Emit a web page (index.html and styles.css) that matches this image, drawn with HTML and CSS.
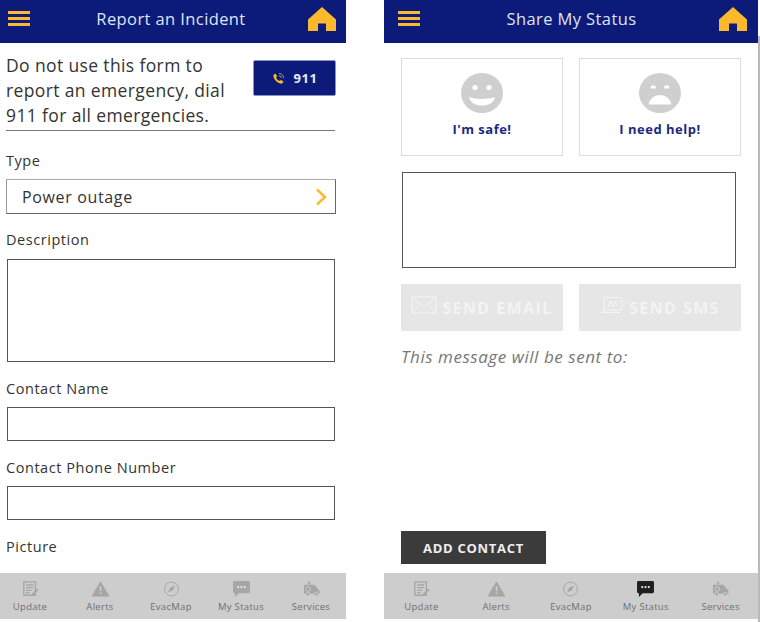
FILE: index.html
```html
<!DOCTYPE html>
<html lang="en">
<head>
<meta charset="utf-8">
<title>Report an Incident / Share My Status</title>
<link rel="stylesheet" href="styles.css">
</head>
<body>
<svg class="defs" width="0" height="0" aria-hidden="true">
  <defs>
    <symbol id="i-home" viewBox="0 0 28 24"><path d="M14 0 L28 12.5 V24 H18 V16.5 H10 V24 H0 V12.5 Z" fill="#fdb92e"/></symbol>
    <symbol id="i-update" viewBox="0 0 18 18"><path d="M1.5 1h13v15h-13z M4 4.500h8 M4 7.500h8 M4 10.500h6 M4 13h4" fill="none" stroke="currentColor" stroke-width="1.500"/><path d="M11 14l5.500-5.500 1.500 1.500-5.500 5.500-2 .5z" fill="currentColor"/></symbol>
    <symbol id="i-alert" viewBox="0 0 18 16"><path d="M9 0.500 L17.800 15.500 H0.200 Z" fill="currentColor" stroke="currentColor" stroke-linejoin="round"/><path d="M9 5v5.200M9 11.800v1.500" stroke="#cdcdcd" stroke-width="1.800"/></symbol>
    <symbol id="i-map" viewBox="0 0 18 18"><circle cx="9" cy="9" r="7.800" fill="none" stroke="currentColor" stroke-width="1.100"/><path d="M13 5 L10.500 10.500 L5 13 L7.500 7.500 Z" fill="currentColor"/></symbol>
    <symbol id="i-status" viewBox="0 0 18 17"><path d="M1.500 0h15a1.500 1.500 0 0 1 1.500 1.500v10a1.500 1.500 0 0 1-1.500 1.500H6l-4 4v-4H1.500A1.500 1.500 0 0 1 0 11.500v-10A1.500 1.500 0 0 1 1.500 0z" fill="currentColor"/><circle cx="5.500" cy="6.500" r="1.200" fill="#e8e8e8"/><circle cx="9" cy="6.500" r="1.200" fill="#e8e8e8"/><circle cx="12.500" cy="6.500" r="1.200" fill="#e8e8e8"/></symbol>
    <symbol id="i-services" viewBox="0 0 18 17"><path d="M1 4h10.500l1 .5 3.500 4 1.500 1.500v3.500H1z" fill="currentColor"/><circle cx="5" cy="14" r="2" fill="currentColor" stroke="#cdcdcd"/><circle cx="14" cy="14" r="2" fill="currentColor" stroke="#cdcdcd"/><path d="M6.500 0.500v3" stroke="currentColor" stroke-width="2"/><circle cx="5.500" cy="8.500" r="2.500" fill="none" stroke="#cdcdcd"/></symbol>
  </defs>
</svg>

<section class="phone phone-left">
  <header class="topbar">
    <span class="burger"><i></i><i></i><i></i></span>
    <h1 class="title">Report an Incident</h1>
    <svg class="home"><use href="#i-home"/></svg>
  </header>
  <main class="form">
    <div class="notice">
      <p class="notice-text">Do not use this form to report an emergency, dial 911 for all emergencies.</p>
      <button class="call" type="button">
        <svg class="call-icon" viewBox="0 0 14 14"><path d="M3.500 1.500 L5.500 4 L4.500 5.800 C5 7.500 6.500 9 8.200 9.500 L10 8.500 L12.500 10.500 L10.800 12.500 C6.500 13 1 7.500 1.500 3.200 Z" fill="#f7b52c"/><path d="M7.500 1.500a5 5 0 0 1 5 5M7.500 4a2.500 2.500 0 0 1 2.500 2.500" fill="none" stroke="#c8a24a" stroke-width="1"/></svg>
        <span>911</span>
      </button>
    </div>
    <label class="label label-type">Type</label>
    <div class="select"><span>Power outage</span><svg class="chev" viewBox="0 0 12 18"><path d="M2 1.500 L10 9 L2 16.500" fill="none" stroke="#fdb92e" stroke-width="2.400"/></svg></div>
    <label class="label label-desc">Description</label>
    <div class="field area"></div>
    <label class="label label-next">Contact Name</label>
    <div class="field line"></div>
    <label class="label label-next">Contact Phone Number</label>
    <div class="field line"></div>
    <label class="label label-next">Picture</label>
  </main>
  <nav class="tabs">
    <a class="tab"><svg class="tab-icon"><use href="#i-update"/></svg><span>Update</span></a>
    <a class="tab"><svg class="tab-icon"><use href="#i-alert"/></svg><span>Alerts</span></a>
    <a class="tab"><svg class="tab-icon"><use href="#i-map"/></svg><span>EvacMap</span></a>
    <a class="tab"><svg class="tab-icon"><use href="#i-status"/></svg><span>My Status</span></a>
    <a class="tab"><svg class="tab-icon"><use href="#i-services"/></svg><span>Services</span></a>
  </nav>
</section>

<section class="phone phone-right">
  <header class="topbar">
    <span class="burger"><i></i><i></i><i></i></span>
    <h1 class="title">Share My Status</h1>
    <svg class="home"><use href="#i-home"/></svg>
  </header>
  <main class="status">
    <div class="cards">
      <button class="card" type="button">
        <svg class="face" viewBox="0 0 42 40"><ellipse cx="21" cy="20" rx="21" ry="20" fill="#cfcfcf"/><circle cx="14" cy="14.500" r="2.600" fill="#fff"/><circle cx="28" cy="14.500" r="2.600" fill="#fff"/><path d="M8 24 C14 26.500 28 26.500 34 24 C32.500 30.500 27 32.500 21 32.500 C15 32.500 9.500 30.500 8 24 Z" fill="#fff"/></svg>
        <span>I'm safe!</span>
      </button>
      <button class="card" type="button">
        <svg class="face" viewBox="0 0 42 40"><ellipse cx="21" cy="20" rx="21" ry="20" fill="#cfcfcf"/><path d="M11.500 15a2.700 2.700 0 0 1 5.400 0v.500h-5.400zM25.100 15a2.700 2.700 0 0 1 5.400 0v.500h-5.400z" fill="#fff"/><path d="M9.500 31.500 C11 25 16 22 21 22 C26 22 31 25 32.500 31.500 Z" fill="#fff"/></svg>
        <span>I need help!</span>
      </button>
    </div>
    <div class="field message"></div>
    <div class="sends">
      <button class="send" type="button">
        <svg class="send-mail" viewBox="0 0 26 18"><path d="M1 1h24v16H1z M1 1l12 10 12-10 M1 17l8.500-9 M25 17l-8.500-9" fill="none" stroke="#f5f5f5" stroke-width="1"/></svg>
        <span>SEND EMAIL</span>
      </button>
      <button class="send" type="button">
        <svg class="send-sms" viewBox="0 0 24 17"><path d="M4 13V2a1.500 1.500 0 0 1 1.500-1.500h15A1.500 1.500 0 0 1 22 2v9.500a1.500 1.500 0 0 1-1.500 1.500H5 L1 15.500 H20" fill="none" stroke="#f5f5f5" stroke-width="1"/><path d="M8 10l2.500-6 2.500 6M12.500 10l2.500-6 2.500 6" fill="none" stroke="#f5f5f5" stroke-width="1"/></svg>
        <span>SEND SMS</span>
      </button>
    </div>
    <p class="sent-to">This message will be sent to:</p>
    <button class="add" type="button">ADD CONTACT</button>
  </main>
  <nav class="tabs">
    <a class="tab"><svg class="tab-icon"><use href="#i-update"/></svg><span>Update</span></a>
    <a class="tab"><svg class="tab-icon"><use href="#i-alert"/></svg><span>Alerts</span></a>
    <a class="tab"><svg class="tab-icon"><use href="#i-map"/></svg><span>EvacMap</span></a>
    <a class="tab tab-active"><svg class="tab-icon"><use href="#i-status"/></svg><span>My Status</span></a>
    <a class="tab"><svg class="tab-icon"><use href="#i-services"/></svg><span>Services</span></a>
  </nav>
</section>
</body>
</html>
```

FILE: styles.css
```css
* { box-sizing: border-box; }
html, body { margin: 0; height: 100%; }
body {
  width: 760px;
  height: 622px;
  overflow: hidden;
  background: #fff;
  display: flex;
  gap: 38px;
  font-family: "Open Sans", "Liberation Sans", sans-serif;
  color: #333;
}
.defs { position: absolute; }
.phone { height: 619px; display: flex; flex-direction: column; }
.phone-left { width: 346px; }
.phone-right { width: 374px; position: relative; }
.phone-right::after { content: ""; position: absolute; left: 374px; top: 36px; width: 2px; height: 586px; background: #b9b9b9; }

.topbar {
  height: 43px;
  flex: none;
  background: #0c1b79;
  display: flex;
  align-items: center;
  justify-content: space-between;
  padding: 0 10px 6px 8px;
}
.phone-right .topbar { padding: 0 11px 6px 14px; }
.burger { width: 22px; display: flex; flex-direction: column; gap: 3.500px; }
.burger i { display: block; height: 2.500px; background: #fdb92e; }
.title { margin: 0 0 0 4px; font-size: 16.500px; font-weight: 400; letter-spacing: .4px; color: #dfe3f2; }
.home { width: 28px; height: 24px; }

.form { flex: 1; padding: 0 10px 0 6px; }
.notice { display: flex; justify-content: space-between; height: 88px; width: 329px; border-bottom: 1px solid #777; }
.notice-text { margin: 9.500px 0 0; width: 240px; font-size: 17.500px; line-height: 25px; letter-spacing: .37px; }
.call {
  margin: 17px -1px 0 0;
  width: 83px; height: 36px;
  flex: none;
  background: #0c1b79;
  border: 1px solid #8c93c4;
  border-radius: 2px;
  color: #e8eaf4;
  display: flex; align-items: center; justify-content: center; gap: 9px;
  font: 700 13px "Open Sans", sans-serif;
  letter-spacing: .5px;
}
.call-icon { width: 13px; height: 13px; }
.label { display: block; font-size: 14.500px; line-height: 20px; letter-spacing: .55px; }
.label-type { margin-top: 20px; }
.select {
  margin-top: 8px;
  height: 35px;
  width: 330px;
  border: 1px solid #666;
  border-color: #aaa #666 #666 #999;
  display: flex; align-items: center; justify-content: space-between;
  padding: 0 8px 0 15px;
  font-size: 16px;
  letter-spacing: .65px;
}
.chev { width: 12px; height: 18px; }
.label-desc { margin-top: 16px; }
.field { border: 1px solid #555; margin: 9px 1px 0; background: #fff; }
.form .field { margin-right: 1px; width: 328px; }
.area { height: 103px; }
.line { height: 34px; }
.form .line { margin-top: 8px; }
.label-next { margin-top: 17px; }

.tabs {
  height: 46px;
  flex: none;
  background: #cdcdcd;
  display: grid;
  grid-template-columns: repeat(5, 1fr);
}
.phone-left .tabs { grid-template-columns: 60px 80px 62px 78px 62px; }
.tab { display: flex; flex-direction: column; align-items: center; padding-top: 8px; color: #a6a6a6; }
.tab span { font-size: 9.500px; line-height: 13px; letter-spacing: .3px; margin-top: 2.500px; color: #6f6f6f; white-space: nowrap; }
.tab-icon { width: 17px; height: 16px; }
.tab-active { color: #1f1f1f; }

.status { flex: 1; position: relative; padding: 15px 17px 0 17px; display: flex; flex-direction: column; }
.cards, .sends { display: flex; gap: 16px; }
.card {
  width: 162px; height: 98px;
  background: #fff;
  border: 1.500px solid #dcdcdc;
  padding: 14px 0 0;
  display: flex; flex-direction: column; align-items: center;
  font: 700 13px "Open Sans", sans-serif;
  color: #1b2a80;
}
.face { width: 42px; height: 40px; }
.card span { margin-top: 7px; letter-spacing: .5px; }
.message { height: 96px; margin: 16px 5px 0 1px; }
.sends { margin-top: 16px; }
.send {
  width: 162px; height: 47px;
  background: #e6e6e6;
  border: 0;
  border-radius: 1px;
  display: flex; align-items: center; justify-content: center; gap: 5px;
  font: 700 16px "Open Sans", sans-serif;
  letter-spacing: 1.400px;
  color: #f3f3f3;
}
.send-mail { width: 26px; height: 18px; margin-top: -5px; }
.send-sms { width: 24px; height: 17px; margin-top: -5px; }
.sent-to { margin: 15px 0 0; font-size: 17px; line-height: 22px; font-style: italic; color: #777; letter-spacing: .55px; }
.add {
  position: absolute;
  left: 17px; bottom: 9px;
  width: 145px; height: 33px;
  background: #3b3b3b;
  border: 0;
  color: #eee;
  font: 700 13px "Open Sans", sans-serif;
  letter-spacing: .7px;
}
```
